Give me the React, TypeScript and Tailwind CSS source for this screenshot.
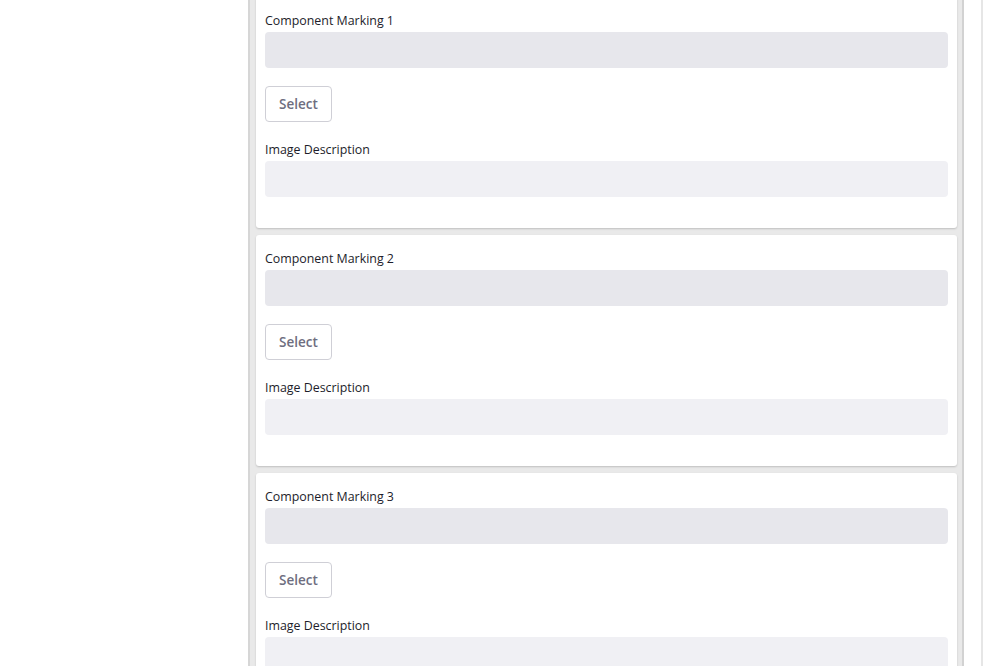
import React from "react";

function Card({ n }: { n: number }) {
  return (
    <div className="bg-white rounded-[3px] shadow-[0_1px_2px_rgba(0,0,0,0.18)] px-[9px] pt-[14.5px] pb-[31px]">
      <div className="text-[12.4px] leading-[17px] text-[#1d1d2b]">Component Marking {n}</div>
      <div className="mt-[3.5px] h-[36px] rounded-[4px] bg-[#e7e7ec]" />
      <button className="mt-[18px] h-[36px] w-[67px] rounded-[4px] border border-[#cfcfd6] bg-white text-[13.5px] font-semibold text-[#6e6e80]">
        Select
      </button>
      <div className="mt-[18.5px] text-[12.4px] leading-[17px] text-[#1d1d2b]">Image Description</div>
      <div className="mt-[3.5px] h-[36px] rounded-[4px] bg-[#f0f0f4]" />
    </div>
  );
}

export default function App() {
  return (
    <div
      className="h-[666px] w-[986px] overflow-hidden bg-white flex"
      style={{ fontFamily: '"Open Sans", "Noto Sans", sans-serif' }}
    >
      <div className="w-[248px] shrink-0" />
      <div className="w-[716px] shrink-0 h-full border-l-2 border-l-[#d6d6d6] border-r-2 border-r-[#d2d2d2] bg-[#e9e9e9] pl-[6px] pr-[5px] overflow-hidden">
        <div className="-mt-[3px] flex flex-col gap-[7px]">
          <Card n={1} />
          <Card n={2} />
          <Card n={3} />
        </div>
      </div>
      <div className="w-[17px] shrink-0" />
      <div className="w-[2px] shrink-0 h-full bg-[#e6e6e6]" />
    </div>
  );
}
